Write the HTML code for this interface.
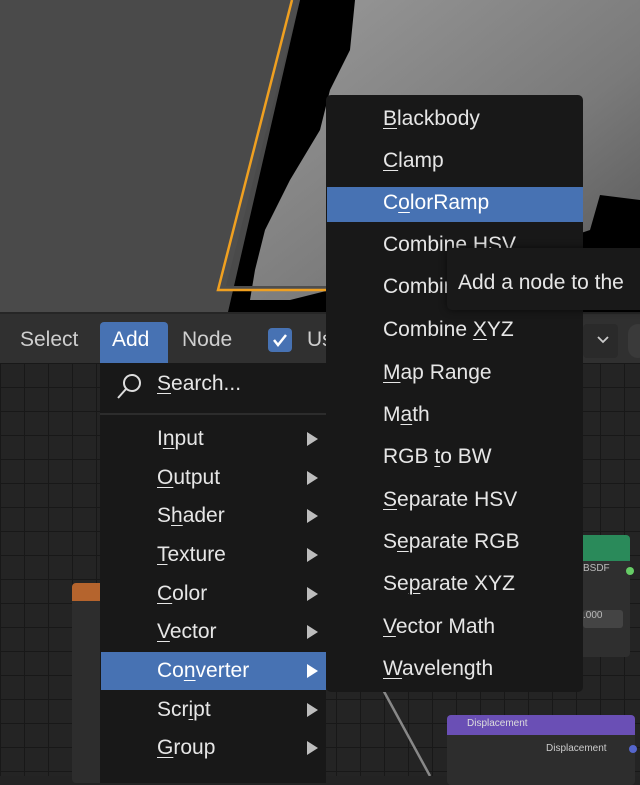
<!DOCTYPE html>
<html><head><style>
*{margin:0;padding:0;box-sizing:border-box}
body{width:640px;height:776px;overflow:hidden;position:relative;background:#232323;font-family:"Liberation Sans","DejaVu Sans",sans-serif;color:#e6e6e6}
.a{position:absolute}
.grid{left:0;top:363px;width:640px;height:413px;background-color:#242424;background-image:linear-gradient(#181818 1px,transparent 1px),linear-gradient(90deg,#181818 1px,transparent 1px);background-size:24px 24px}
.menu{background:#181818}
.it{position:absolute;font-size:21px;line-height:24px;white-space:nowrap}
.hl{background:#4772b3}
.arr{position:absolute;left:307px;width:0;height:0;border-left:11px solid #bdbdbd;border-top:7px solid transparent;border-bottom:7px solid transparent}
u{text-decoration-thickness:1px;text-underline-offset:3px}
</style></head><body>
<div class="a" style="left:0;top:0;width:640px;height:312px;background:#4a4a4a"></div>
<svg class="a" style="left:0;top:0" width="640" height="312">
<defs><linearGradient id="g" x1="0" y1="0" x2="1" y2="1"><stop offset="0" stop-color="#9a9a9a"/><stop offset="0.6" stop-color="#7a7a7a"/><stop offset="1" stop-color="#555"/></linearGradient></defs>
<polygon points="300,0 640,0 640,312 228,312" fill="#000"/>
<path d="M355,0 L640,0 L640,200 L600,195 L590,230 L560,240 L540,210 L510,250 L480,290 L330,290 L290,300 L250,300 L255,270 L265,230 L290,180 L320,130 L330,90 L350,50 Z" fill="url(#g)"/>
<polygon points="300,0 290,0 218,290 330,290 330,286 226,286" fill="#4e4e4e"/>
<polyline points="292,0 218,290 340,290" fill="none" stroke="#f0a020" stroke-width="2.5"/>
</svg>
<div class="a" style="left:0;top:312px;width:640px;height:51px;background:#303030;border-top:2px solid #262626"></div>
<div class="it" style="left:20px;top:328px;color:#cfcfcf">Select</div>
<div class="a hl" style="left:100px;top:322px;width:68px;height:41px;border-radius:4px 4px 0 0"></div>
<div class="it" style="left:112px;top:328px;color:#fff">Add</div>
<div class="it" style="left:182px;top:328px;color:#cfcfcf">Node</div>
<div class="a" style="left:268px;top:328px;width:24px;height:24px;background:#4772b3;border-radius:4px"></div>
<svg class="a" style="left:268px;top:328px" width="24" height="24"><polyline points="6,12 10,17 18,7" fill="none" stroke="#fff" stroke-width="2.5"/></svg>
<div class="it" style="left:307px;top:328px;color:#cfcfcf">Us</div>
<div class="a" style="left:583px;top:324px;width:35px;height:34px;background:#2a2a2a;border-radius:4px"></div>
<svg class="a" style="left:596px;top:335px" width="14" height="10"><polyline points="2,2 7,7 12,2" fill="none" stroke="#ccc" stroke-width="1.8"/></svg>
<div class="a" style="left:628px;top:324px;width:20px;height:34px;background:#3a3a3a;border-radius:10px"></div>
<div class="a grid"></div>
<div class="a" style="left:72px;top:583px;width:40px;height:200px;background:#2d2d2d;border-radius:4px"></div>
<div class="a" style="left:72px;top:583px;width:40px;height:18px;background:#b5642d;border-radius:4px 4px 0 0"></div>
<div class="a" style="left:570px;top:535px;width:60px;height:122px;background:#2f2f2f;border-radius:4px"></div>
<div class="a" style="left:570px;top:535px;width:60px;height:26px;background:#2a8a5a;border-radius:4px 4px 0 0"></div>
<div class="a" style="left:583px;top:563px;font-size:10px;color:#bbb">BSDF</div>
<div class="a" style="left:626px;top:567px;width:8px;height:8px;border-radius:50%;background:#6c6"></div>
<div class="a" style="left:583px;top:610px;width:40px;height:18px;background:#444;border-radius:3px;font-size:10px;color:#bbb">.000</div>
<svg class="a" style="left:360px;top:600px" width="100" height="176"><line x1="15" y1="75" x2="70" y2="176" stroke="#888" stroke-width="2.5"/></svg>
<div class="a" style="left:447px;top:715px;width:188px;height:70px;background:#2d2d2d;border-radius:4px"></div>
<div class="a" style="left:447px;top:715px;width:188px;height:20px;background:#6a4fb5;border-radius:4px 4px 0 0;font-size:10px;color:#ddd;padding:3px 0 0 20px">Displacement</div>
<div class="a" style="left:546px;top:743px;font-size:10px;color:#ccc">Displacement</div>
<div class="a" style="left:629px;top:745px;width:8px;height:8px;border-radius:50%;background:#56c"></div>
<div class="a menu" style="left:100px;top:363px;width:226px;height:420px"></div>
<svg class="a" style="left:115px;top:371px" width="30" height="30"><circle cx="17" cy="12" r="8" fill="none" stroke="#ddd" stroke-width="2"/><line x1="11" y1="18" x2="3" y2="27" stroke="#ddd" stroke-width="2"/></svg>
<div class="it" style="left:157px;top:372px"><u>S</u>earch...</div>
<div class="a" style="left:100px;top:413px;width:226px;height:2px;background:#2c2c2c"></div>
<div class="a hl" style="left:101px;top:652px;width:225px;height:38px"></div>
<div class="it" style="left:157px;top:427px">I<u>n</u>put</div><div class="arr" style="top:432px"></div>
<div class="it" style="left:157px;top:466px"><u>O</u>utput</div><div class="arr" style="top:471px"></div>
<div class="it" style="left:157px;top:504px">S<u>h</u>ader</div><div class="arr" style="top:509px"></div>
<div class="it" style="left:157px;top:543px"><u>T</u>exture</div><div class="arr" style="top:548px"></div>
<div class="it" style="left:157px;top:582px"><u>C</u>olor</div><div class="arr" style="top:587px"></div>
<div class="it" style="left:157px;top:620px"><u>V</u>ector</div><div class="arr" style="top:625px"></div>
<div class="it" style="left:157px;top:659px;color:#fff">Co<u>n</u>verter</div><div class="arr" style="top:664px;border-left-color:#fff"></div>
<div class="it" style="left:157px;top:698px">Scr<u>i</u>pt</div><div class="arr" style="top:703px"></div>
<div class="it" style="left:157px;top:736px"><u>G</u>roup</div><div class="arr" style="top:741px"></div>
<div class="a menu" style="left:326px;top:95px;width:257px;height:597px;border-radius:5px"></div>
<div class="a hl" style="left:327px;top:187px;width:256px;height:35px"></div>
<div class="it" style="left:383px;top:107px"><u>B</u>lackbody</div>
<div class="it" style="left:383px;top:149px"><u>C</u>lamp</div>
<div class="it" style="left:383px;top:191px;color:#fff">C<u>o</u>lorRamp</div>
<div class="it" style="left:383px;top:233px">Combine HSV</div>
<div class="it" style="left:383px;top:275px">Combine RGB</div>
<div class="it" style="left:383px;top:318px">Combine <u>X</u>YZ</div>
<div class="it" style="left:383px;top:361px"><u>M</u>ap Range</div>
<div class="it" style="left:383px;top:403px">M<u>a</u>th</div>
<div class="it" style="left:383px;top:445px">RGB <u>t</u>o BW</div>
<div class="it" style="left:383px;top:488px"><u>S</u>eparate HSV</div>
<div class="it" style="left:383px;top:530px">S<u>e</u>parate RGB</div>
<div class="it" style="left:383px;top:572px">Se<u>p</u>arate XYZ</div>
<div class="it" style="left:383px;top:615px"><u>V</u>ector Math</div>
<div class="it" style="left:383px;top:657px"><u>W</u>avelength</div>
<div class="a" style="left:380px;top:251px;width:67px;height:12px;background:#181818"></div>
<div class="a" style="left:447px;top:248px;width:200px;height:62px;background:#191919;border-radius:5px;box-shadow:0 0 8px rgba(0,0,0,.6)"></div>
<div class="it" style="left:458px;top:271px;color:#e6e6e6">Add a node to the</div>
</body></html>
